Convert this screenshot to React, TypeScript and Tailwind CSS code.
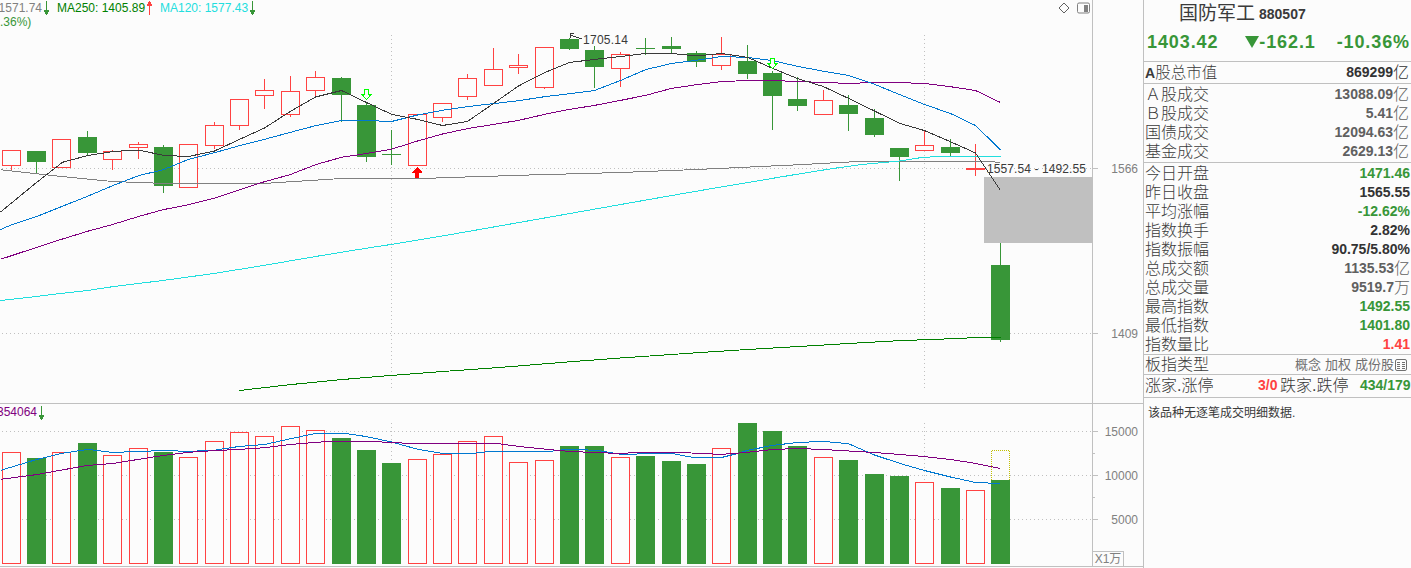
import clsx from "clsx";
import type { ReactNode } from "react";

const RED = "#ff4242";
const GREEN = "#389638";
const BG = "#fcfcfc";
const LINE = "#c0c0c0";

type Bar = {
  x: number;
  up: boolean;
  high: number;
  top: number;
  bottom: number;
  low: number;
  volume: number;
};

// x, up, high, body top, body bottom, low, volume top
const rows: [number, number, number, number, number, number, number][] = [
  [11, 1, 150, 150, 166, 170, 452],
  [36, 0, 151, 151, 162, 173, 458],
  [61, 1, 139, 139, 168, 168, 452],
  [87, 0, 131, 137, 153, 156, 443],
  [112, 1, 150, 151, 160, 170, 455],
  [138, 1, 142, 144, 148, 159, 448],
  [163, 0, 145, 147, 186, 193, 452],
  [188, 1, 144, 144, 188, 188, 457],
  [214, 1, 122, 125, 146, 149, 441],
  [239, 1, 99, 99, 126, 130, 432],
  [264, 1, 79, 90, 96, 109, 436],
  [290, 1, 76, 91, 115, 117, 426],
  [315, 1, 71, 77, 91, 97, 430],
  [341, 0, 77, 78, 95, 122, 438],
  [366, 0, 102, 105, 157, 162, 450],
  [391, 0, 130, 154, 155, 165, 463],
  [417, 1, 114, 114, 166, 166, 459],
  [442, 1, 103, 103, 118, 122, 454],
  [467, 1, 74, 78, 97, 100, 441],
  [493, 1, 48, 69, 86, 86, 436],
  [518, 1, 54, 65, 68, 74, 462],
  [544, 1, 47, 47, 88, 89, 460],
  [569, 0, 38, 39, 49, 50, 446],
  [594, 0, 46, 50, 67, 88, 446],
  [620, 1, 52, 54, 69, 87, 457],
  [645, 0, 38, 48, 49, 55, 456],
  [671, 0, 37, 46, 49, 53, 461],
  [696, 0, 51, 53, 62, 67, 464],
  [721, 1, 37, 54, 66, 70, 448],
  [747, 0, 45, 61, 74, 79, 423],
  [772, 0, 71, 73, 96, 130, 431],
  [797, 0, 77, 99, 106, 111, 446],
  [823, 1, 90, 100, 115, 115, 457],
  [848, 0, 95, 105, 114, 131, 460],
  [874, 0, 109, 118, 135, 137, 474],
  [899, 0, 148, 148, 157, 181, 476],
  [924, 1, 131, 145, 151, 151, 482],
  [950, 0, 139, 147, 153, 156, 488],
  [975, 1, 144, 168, 170, 176, 490],
  [1000, 0, 243, 265, 340, 342, 480],
];

const bars: Bar[] = rows.map(([x, up, high, top, bottom, low, volume]) => ({
  x,
  up: up === 1,
  high,
  top,
  bottom,
  low,
  volume,
}));

const priceLines = [
  {
    color: "#808080",
    points:
      "0,169.7 36,173.7 61,176.5 112,181.5 163,183.4 264,183.4 341,178.5 430,178.4 442,177.6 480,176.6 518,175.3 620,172.5 696,169.5 797,164.8 835,162.7 860,161.4 987,161.4 1000,162.5",
  },
  {
    color: "#22dede",
    points:
      "0,300.5 36,296.5 60,293.5 87,290.5 112,286.7 163,280.4 214,273.4 264,265.3 315,256.5 366,248.2 391,244.4 442,236 518,222.6 569,213.6 649,199.4 693,191.7 780,177 812,171.7 838,167.7 863,164.3 897,161.3 920,157.7 938,156.4 1000,156.4",
  },
  {
    color: "#008000",
    points:
      "239,390.5 290,384.6 341,379.6 391,375.4 442,371.5 500,367.4 569,361.8 620,358 700,352.5 747,349.5 800,346.4 850,343.4 900,340.6 930,339.5 960,338.4 975,337.5 1000,337.5",
  },
  {
    color: "#800080",
    points:
      "0,259.3 36,247.4 61,239.3 87,231.3 112,224.5 138,216.5 163,209.6 188,204.7 214,198.2 239,189.7 264,181.7 290,174.5 315,164.7 341,157.3 366,153.5 391,149.2 417,141 442,134 467,128.6 493,124.4 518,120.4 544,114.4 569,109.4 594,105.4 620,100.4 645,95.4 671,88.4 696,84.7 721,81.6 747,80.5 772,80.5 797,81.5 823,82.5 848,83.4 874,82.5 899,82.6 924,83.5 950,86.7 975,90.5 1000,102.5",
  },
  {
    color: "#0078d0",
    points:
      "0,229.5 11,224.8 36,216.6 61,206.6 87,196.3 112,185.7 138,175.7 163,169.6 188,159.4 214,152.7 239,145.7 264,139.3 290,132.3 315,125.7 341,120.5 366,120.5 391,121.5 417,115 442,110.3 467,106.6 493,103.6 518,100.7 544,96.7 569,93.7 594,90.5 620,80.5 645,69.7 671,63.4 696,60.3 721,56.5 747,57.4 772,60.6 797,66.3 823,71.3 848,75.5 874,84.3 899,94.5 924,104.5 950,113.5 975,125.5 1000,149.8",
  },
  {
    color: "#3a3a3a",
    points:
      "0,212 36,182.5 62,162.3 87,155.6 112,151.6 129,150.4 140,150.4 163,155.4 188,156.5 214,151 239,139.4 264,128 290,111.3 315,97 341,90.5 366,102.5 391,114.3 417,119.4 442,125.5 467,121.4 493,103.5 518,86 544,72.6 569,62.5 594,59.4 620,56.5 645,53.5 671,53.5 696,56 721,53.5 747,57.3 772,68.3 797,78.6 823,86.6 848,98.4 874,111 899,123.3 924,130.6 950,141.7 975,153 1000,190.5",
  },
];

const volumeLines = [
  {
    color: "#0078d0",
    points:
      "0,470.4 36,459.5 61,453.4 87,449.4 112,452.4 138,451.5 163,450.5 188,451.4 214,450.2 239,446.4 264,444.5 290,438.7 315,433.5 345,433.5 366,436.6 391,442 417,449.2 442,453.4 472,453.4 490,451.4 550,451.4 565,449.4 580,449.4 600,451 620,454.3 632,454.3 645,453.4 671,453.4 690,457 697,457.5 721,457.5 735,454 747,450.4 772,445.4 797,442.5 823,441.4 848,443.7 874,455 899,463.3 924,470.5 950,477 975,482.5 1000,483.5",
  },
  {
    color: "#800080",
    points:
      "0,479.4 36,474.6 87,465.4 112,463.5 163,455.4 188,452.3 214,450.6 239,449.4 264,447.7 290,444.5 315,442.4 330,441.4 370,441.5 391,442.4 410,443.5 497,443.5 518,446.4 544,449.1 569,451.4 594,452.5 620,453.5 635,452.5 680,452.5 721,454.4 747,452.3 772,449.5 797,448.5 823,449.5 848,451 874,452.5 899,454.4 924,456.6 950,459.5 975,463.4 1000,468.5",
  },
];

function Candle({ bar }: { bar: Bar }) {
  const color = bar.up ? RED : GREEN;
  const hollow = bar.up && bar.bottom - bar.top > 2;

  return (
    <g>
      <rect x={bar.x} y={bar.high} width={1} height={bar.low - bar.high} fill={color} />
      {hollow ? (
        <rect
          x={bar.x - 8.5}
          y={bar.top + 0.5}
          width={18}
          height={bar.bottom - bar.top - 1}
          fill={BG}
          stroke={color}
        />
      ) : (
        <rect
          x={bar.x - 9}
          y={bar.top}
          width={19}
          height={bar.bottom - bar.top}
          fill={color}
        />
      )}
    </g>
  );
}

function VolumeBar({ bar }: { bar: Bar }) {
  return bar.up ? (
    <rect
      x={bar.x - 8.5}
      y={bar.volume + 0.5}
      width={18}
      height={563 - bar.volume}
      fill={BG}
      stroke={RED}
    />
  ) : (
    <rect x={bar.x - 9} y={bar.volume} width={19} height={564 - bar.volume} fill={GREEN} />
  );
}

function Grid({ ys, from, to }: { ys: number[]; from: number; to: number }) {
  return (
    <g stroke={LINE} strokeDasharray="1 3">
      {ys.map((y) => (
        <path key={y} d={`M2 ${y + 0.5}H1092`} />
      ))}
      {[391.5, 924.5].map((x) => (
        <path key={x} d={`M${x} ${from}V${to}`} />
      ))}
    </g>
  );
}

function Trend({ up }: { up?: boolean }) {
  return (
    <svg
      width="5"
      height="14"
      viewBox="0 0 5 14"
      shapeRendering="crispEdges"
      className={clsx("shrink-0", up && "rotate-180")}
    >
      <path d="M2 0h1v9h2v2h-1v2h-1v1h-1v-1h-1v-2h-1v-2h2z" fill={up ? RED : GREEN} />
    </svg>
  );
}

function DownMark({ x, y }: { x: number; y: number }) {
  return (
    <path
      transform={`translate(${x} ${y})`}
      d="M-1.5 .5h4v5h2.5l-4.5 5l-4.5 -5h2.5z"
      fill={BG}
      stroke="#00ff00"
      shapeRendering="crispEdges"
    />
  );
}

function PriceChart() {
  return (
    <svg width="1092" height="373" viewBox="0 30 1092 373" className="block">
      <g shapeRendering="crispEdges">
        <Grid ys={[168, 333]} from={35} to={389} />
        <rect x={984} y={177} width={108} height={66} fill={LINE} />
        {bars.map((bar) => (
          <Candle key={bar.x} bar={bar} />
        ))}
        {priceLines.map((line) => (
          <polyline
            key={line.color}
            points={line.points}
            fill="none"
            stroke={line.color}
            transform="translate(.5 0)"
          />
        ))}
      </g>
      <DownMark x={366} y={89} />
      <DownMark x={772} y={58} />
      <path
        d="M417 167l5 5v1h-3v5h-4v-5h-3v-1z"
        fill="#ff0000"
        shapeRendering="crispEdges"
      />
      <path
        d="M573.5 33.5H570.5V37.5M571.5 35.5L581.5 39"
        fill="none"
        stroke="#3a3a3a"
        shapeRendering="crispEdges"
      />
      <g fontSize="12" fill="#3a3a3a">
        <text x={583} y={44} textLength={45}>
          1705.14
        </text>
        <text x={987} y={173} textLength={99}>
          1557.54 - 1492.55
        </text>
      </g>
    </svg>
  );
}

function VolumeChart() {
  return (
    <svg width="1092" height="145" viewBox="0 421 1092 145" className="block">
      <g shapeRendering="crispEdges">
        <Grid ys={[431, 475, 519]} from={423} to={563} />
        {bars.map((bar) => (
          <VolumeBar key={bar.x} bar={bar} />
        ))}
        <path
          d="M991.5 480V450.5H1009.5V480"
          fill="none"
          stroke="#c0c000"
          strokeDasharray="1 1"
        />
        {volumeLines.map((line) => (
          <polyline
            key={line.color}
            points={line.points}
            fill="none"
            stroke={line.color}
            transform="translate(.5 0)"
          />
        ))}
      </g>
    </svg>
  );
}

function Axis({
  top,
  height,
  labels,
  minor = [],
}: {
  top: number;
  height: number;
  labels: [number, string][];
  minor?: number[];
}) {
  return (
    <svg width="50" height={height} viewBox={`1093 ${top} 50 ${height}`} className="block">
      {labels.map(([y, label]) => (
        <g key={y}>
          <rect x={1093} y={y} width={5} height={1} fill={LINE} />
          <text x={1138} y={y + 5} fontSize="12" textAnchor="end" fill="#808080">
            {label}
          </text>
        </g>
      ))}
      {minor.map((y) => (
        <rect key={y} x={1093} y={y} width={2} height={1} fill={LINE} />
      ))}
    </svg>
  );
}

function Row({
  label,
  value,
  unit,
  tone = "text-[#333333]",
}: {
  label: ReactNode;
  value: string;
  unit?: string;
  tone?: string;
}) {
  return (
    <div className="flex h-[19px] items-center justify-between whitespace-nowrap">
      <span className="text-base leading-[19px] font-light">{label}</span>
      <span className={clsx("flex items-center text-sm leading-[19px] font-bold", tone)}>
        {value}
        {unit ? <span className="text-base leading-[19px] font-light">{unit}</span> : null}
      </span>
    </div>
  );
}

const turnover = [
  { label: "Ａ股成交", value: "13088.09" },
  { label: "Ｂ股成交", value: "5.41" },
  { label: "国债成交", value: "12094.63" },
  { label: "基金成交", value: "2629.13" },
];

const stats = [
  { label: "今日开盘", value: "1471.46", tone: "text-[#389638]" },
  { label: "昨日收盘", value: "1565.55" },
  { label: "平均涨幅", value: "-12.62%", tone: "text-[#389638]" },
  { label: "指数换手", value: "2.82%" },
  { label: "指数振幅", value: "90.75/5.80%" },
  { label: "总成交额", value: "1135.53", unit: "亿", tone: "text-[#606060]" },
  { label: "总成交量", value: "9519.7", unit: "万", tone: "text-[#606060]" },
  { label: "最高指数", value: "1492.55", tone: "text-[#389638]" },
  { label: "最低指数", value: "1401.80", tone: "text-[#389638]" },
  { label: "指数量比", value: "1.41", tone: "text-[#ff4242]" },
];

function QuotePanel() {
  return (
    <aside className="flex w-[267px] flex-col overflow-hidden text-[#3a3a3a]">
      <div className="flex h-[25px] items-center gap-1 pl-[35px] leading-none whitespace-nowrap">
        <span className="pt-px text-[19px] leading-[25px]">国防军工</span>
        <span className="pt-0.5 text-sm font-bold">880507</span>
      </div>
      <div className="flex h-[37px] items-center justify-between border-b border-[#c0c0c0] pr-px pb-0.5 pl-[3px] text-lg leading-none font-bold tracking-[0.9px] whitespace-nowrap text-[#389638]">
        <span>1403.42</span>
        <span className="ml-1.5 flex items-center">
          <svg width="14" height="12" viewBox="0 0 14 12">
            <path d="M0 0h14L7 12z" fill="#389638" />
          </svg>
          -162.1
        </span>
        <span>-10.36%</span>
      </div>
      <div className="h-[22px] border-b border-[#c0c0c0] pt-px pr-0.5 pl-px">
        <Row
          label={
            <>
              <span className="text-sm font-bold">A</span>
              <span className="text-[15.5px]">股总市值</span>
            </>
          }
          value="869299"
          unit="亿"
        />
      </div>
      <div className="h-[79px] border-b border-[#c0c0c0] pt-px pr-0.5 pl-px">
        {turnover.map((row) => (
          <Row key={row.label} {...row} unit="亿" tone="text-[#606060]" />
        ))}
      </div>
      <div className="h-48 border-b border-[#c0c0c0] pt-px pr-px pl-px">
        {stats.map((row) => (
          <Row key={row.label} {...row} />
        ))}
      </div>
      <div className="flex h-5 items-center justify-between border-b border-[#c0c0c0] pr-[3px] pl-px whitespace-nowrap">
        <span className="text-base leading-[19px] font-light">板指类型</span>
        <span className="flex items-center gap-1 text-[13px] leading-[19px] text-[#707070]">
          <span>概念</span>
          <span>加权</span>
          <span className="flex items-center gap-px">
            成份股
            <svg width="13" height="12" viewBox="0 0 13 12" fill="none" stroke="#707070">
              <rect x="0.5" y="0.5" width="11" height="11" rx="1.5" />
              <path d="M2 3.5h3M7 3.5h3M2 5.5h3M7 5.5h3M2 7.5h3M7 7.5h3M2 9.5h3M7 9.5h3" />
            </svg>
          </span>
        </span>
      </div>
      <div className="flex h-[23px] items-center border-b border-[#c0c0c0] pb-0.5 pl-px whitespace-nowrap">
        <span className="w-[113px] text-base leading-[19px] font-light">涨家.涨停</span>
        <span className="w-[22px] text-sm font-bold text-[#ff4242]">3/0</span>
        <span className="w-20 text-base leading-[19px] font-light">跌家.跌停</span>
        <span className="text-sm font-bold text-[#389638]">434/179</span>
      </div>
      <p className="pt-1.5 pl-1 text-xs leading-[18px]">该品种无逐笔成交明细数据.</p>
    </aside>
  );
}

export default function App() {
  return (
    <div className="flex h-[568px] w-[1411px] overflow-hidden bg-[#fcfcfc] font-['Liberation_Sans','Noto_Sans_CJK_SC',sans-serif]">
      <main className="flex w-[1144px] flex-col border-r border-[#c0c0c0]">
        <section className="flex h-[404px] border-b border-[#c0c0c0]">
          <div className="w-[1092px]">
            <header className="flex h-[30px] justify-between overflow-hidden text-xs leading-[15px] whitespace-nowrap">
              <div>
                <div className="flex h-4 items-center">
                  <span className="flex w-[42px] justify-end text-[#808080]">1571.74</span>
                  <span className="flex pl-0.5">
                    <Trend />
                  </span>
                  <span className="w-[98px] pl-2 text-[#008000]">MA250: 1405.89</span>
                  <Trend up />
                  <span className="w-[98px] pl-2 text-[#22dede]">MA120: 1577.43</span>
                  <Trend />
                </div>
                <div className="leading-3 text-[#389638]">.36%)</div>
              </div>
              <div className="flex gap-[7px] pt-0.5 pr-[2px]">
                <svg width="12" height="12" viewBox="0 0 12 12" fill="none">
                  <path d="M6 1L11 6L6 11L1 6z" stroke="#606060" />
                </svg>
                <svg width="13" height="12" viewBox="0 0 13 12" fill="none">
                  <rect x="0.5" y="1" width="12" height="10" rx="1.5" stroke="#808080" />
                  <rect x="7" y="3" width="4" height="7" fill="#808080" />
                </svg>
              </div>
            </header>
            <PriceChart />
          </div>
          <div className="border-l border-[#c0c0c0]">
            <Axis
              top={0}
              height={403}
              labels={[
                [168, "1566"],
                [333, "1409"],
              ]}
            />
          </div>
        </section>
        <section className="flex h-[163px] border-b border-[#c0c0c0]">
          <div className="w-[1092px]">
            <header className="flex h-[17px] items-center text-xs leading-[15px]">
              <span className="flex w-[37px] justify-end text-[#800080]">354064</span>
              <span className="pl-0.5">
                <Trend />
              </span>
            </header>
            <VolumeChart />
          </div>
          <div className="border-l border-[#c0c0c0]">
            <Axis
              top={404}
              height={147}
              labels={[
                [431, "15000"],
                [475, "10000"],
                [519, "5000"],
              ]}
              minor={[453, 497]}
            />
            <div className="flex h-[15px] w-[31px] items-center justify-center border-t border-r border-[#c0c0c0] text-xs leading-[14px] whitespace-nowrap text-[#808080]">
              X1万
            </div>
          </div>
        </section>
      </main>
      <QuotePanel />
    </div>
  );
}
